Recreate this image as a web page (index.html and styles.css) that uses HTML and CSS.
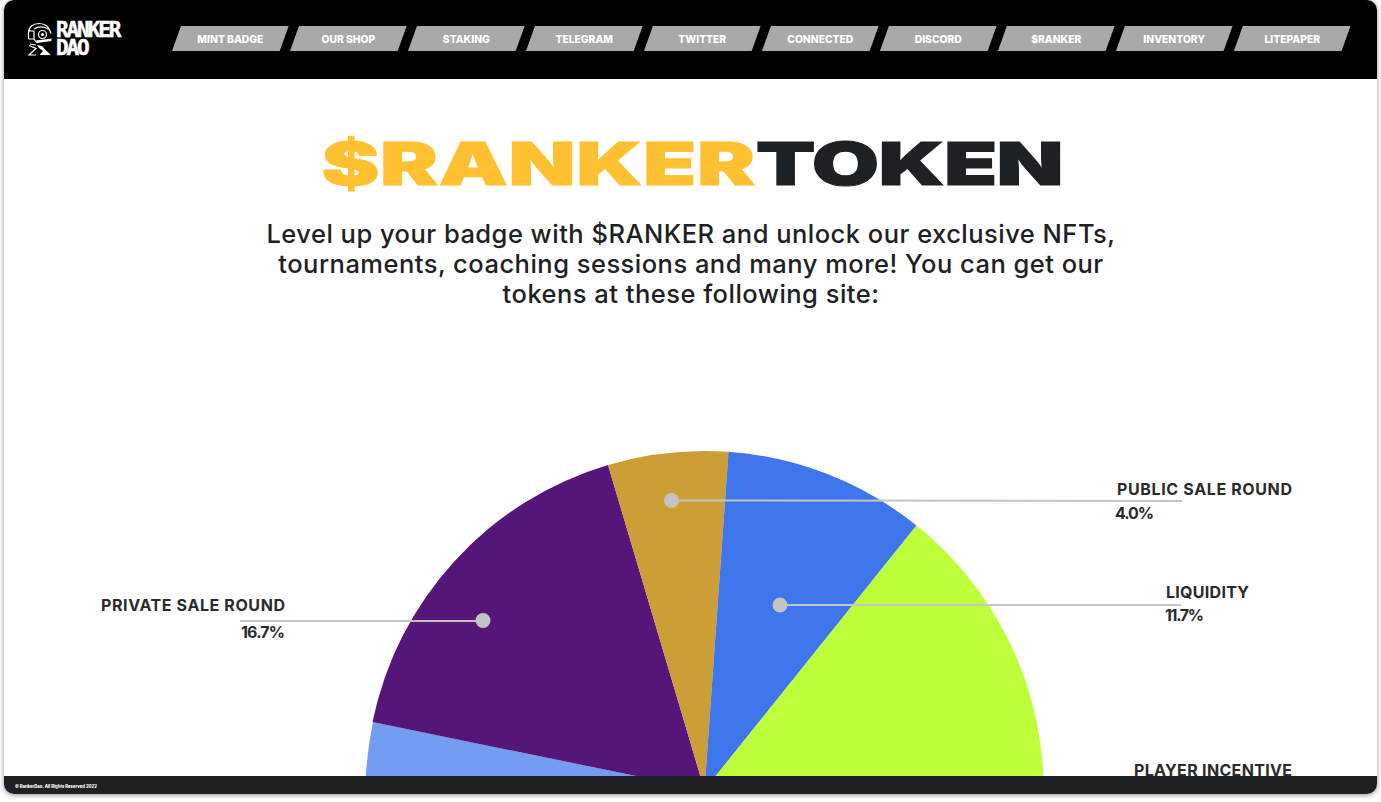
FILE: index.html
```html
<!DOCTYPE html>
<html lang="en">
<head>
    <meta charset="UTF-8">
    <meta name="viewport" content="width=device-width, initial-scale=1.0">
    <title>RankerDao - $RANKER Token</title>
    <link rel="stylesheet" href="styles.css">
</head>
<body>
    <div class="window">
        <header class="topbar">
            <a class="logo" href="#">
                <svg class="logo-robot" viewBox="0 0 27 36" width="27" height="36">
                    <path class="robot-line" d="M2.5 18V12C2.5 6 7 2.5 13 2.5C19 2.5 23.5 6 25 12.5"/>
                    <path class="robot-line" d="M2.5 10H8V18H2.5M8 8C12 5.500 18 5.500 23 8.500"/>
                    <path class="robot-line" d="M8 18L11 22"/>
                    <circle class="robot-line" cx="16.500" cy="13.500" r="4"/>
                    <circle class="robot-fill" cx="16.500" cy="13.500" r="1.600"/>
                    <path class="robot-fill" d="M10 19.500L25.500 17.500V20L11 22Z"/>
                    <path class="robot-fill" d="M11 24L16 25L20 29.500L25 34H13.500L17 30L13 27Z"/>
                    <path class="robot-line" d="M3 24.500L10 27.500L3 34H10M10 24L4 23"/>
                </svg>
                <span class="logo-text">RANKER<br>DAO</span>
            </a>
            <nav class="menu">
                <a href="#">MINT BADGE</a>
                <a href="#">OUR SHOP</a>
                <a href="#">STAKING</a>
                <a href="#">TELEGRAM</a>
                <a href="#">TWITTER</a>
                <a href="#">CONNECTED</a>
                <a href="#">DISCORD</a>
                <a href="#">$RANKER</a>
                <a href="#">INVENTORY</a>
                <a href="#">LITEPAPER</a>
            </nav>
        </header>

        <main class="content">
            <h1 class="title"><span class="title-inner"><span class="yellow">$RANKER</span><span class="dark">TOKEN</span></span></h1>
            <p class="intro">Level up your badge with $RANKER and unlock our exclusive NFTs,<br>tournaments, coaching sessions and many more! You can get our<br>tokens at these following site:</p>

            <!-- viewBox uses the same numbers as the page so the chart is easy to measure -->
            <svg class="chart" viewBox="4 400 1373 400" width="1373" height="400">
                <path fill="#729df0" d="M704.5 790L373 722A339 339 0 0 0 365.5 790Z"/>
                <path fill="#561578" d="M704.5 790L608 465A339 339 0 0 0 372.5 722Z"/>
                <path fill="#cb9e36" d="M704.5 790L728.5 451.8A339 339 0 0 0 608 465Z"/>
                <path fill="#4076eb" d="M704.5 790L916.5 525.5A339 339 0 0 0 728.5 451.8Z"/>
                <path fill="#bdff3a" d="M704.5 790L1043.5 790A339 339 0 0 0 916.5 525.5Z"/>

                <line class="leader" x1="671" y1="500.5" x2="1182" y2="501"/>
                <circle class="dot" cx="671.5" cy="500.5" r="7.5"/>
                <line class="leader" x1="780" y1="605" x2="1181" y2="605"/>
                <circle class="dot" cx="780" cy="605" r="7.5"/>
                <line class="leader" x1="240" y1="621" x2="483" y2="621"/>
                <circle class="dot" cx="483" cy="620.5" r="7.5"/>

                <text class="label" x="1117" y="494.5" textLength="175">PUBLIC SALE ROUND</text>
                <text class="label" x="1115" y="519" textLength="39">4.0%</text>
                <text class="label" x="1166" y="597.5" textLength="83">LIQUIDITY</text>
                <text class="label" x="1165" y="621" textLength="39">11.7%</text>
                <text class="label" x="101" y="610.5" textLength="184">PRIVATE SALE ROUND</text>
                <text class="label" x="241" y="638" textLength="44">16.7%</text>
                <text class="label" x="1134" y="775.5" textLength="158">PLAYER INCENTIVE</text>
            </svg>
        </main>

        <footer class="bottombar">© RankerDao. All Rights Reserved 2022</footer>
    </div>
</body>
</html>
```

FILE: styles.css
```css
*{
    box-sizing: border-box;
    margin: 0;
    padding: 0;
}
body{
    height: 802px;
    overflow: hidden;
    background-color: #ffffff;
    font-family: Inter, "Noto Sans", sans-serif;
}
a{
    text-decoration: none;
}
.window{
    display: flex;
    flex-direction: column;
    height: 794px;
    margin: 0 4px;
    border-radius: 10px;
    overflow: hidden;
    background: #ffffff;
    box-shadow: 0 1px 5px rgba(0,0,0,0.45);
}
.topbar{
    display: flex;
    align-items: center;
    flex: none;
    height: 79px;
    padding-left: 22px;
    padding-bottom: 2px;
    background: #000000;
}
.logo{
    display: flex;
    align-items: center;
    gap: 3px;
    width: 146px;
    flex: none;
    color: #ffffff;
}
.logo-robot{
    flex: none;
}
.robot-line{
    fill: none;
    stroke: #ffffff;
    stroke-width: 1.2;
}
.robot-fill{
    fill: #ffffff;
}
.logo-text{
    font-family: "DejaVu Sans Mono", monospace;
    font-size: 21px;
    font-weight: 700;
    line-height: 18px;
    letter-spacing: -2.1px;
    -webkit-text-stroke: 0.5px #ffffff;
}
.menu{
    display: flex;
    gap: 1.3px;
}
.menu a{
    display: flex;
    align-items: center;
    justify-content: center;
    width: 116.7px;
    height: 25px;
    background: #a9a9a9;
    color: #ffffff;
    font-size: 10.3px;
    font-weight: 800;
    clip-path: polygon(9px 0, 100% 0, calc(100% - 9px) 100%, 0 100%);
}
.content{
    flex: 1;
    min-height: 0;
    overflow: hidden;
}
.title{
    display: flex;
    justify-content: center;
    margin-top: 50px;
    padding-left: 3px;
    color: #1e2124;
    font-size: 59px;
    font-weight: 900;
    line-height: 70px;
}
.title-inner{
    display: block;
    transform: scaleX(1.476);
    -webkit-text-stroke: 1px currentColor;
}
.yellow{
    color: #ffc131;
    letter-spacing: 0.4px;
}
.dark{
    letter-spacing: -0.5px;
}
.intro{
    margin-top: 20px;
    padding-left: 1px;
    color: #1e2124;
    font-size: 25.5px;
    font-weight: 500;
    line-height: 30px;
    letter-spacing: 0.48px;
    text-align: center;
}
.chart{
    display: block;
    margin-top: 91px;
}
.leader{
    stroke: #c4c4c4;
    stroke-width: 2;
}
.dot{
    fill: #c4c4c4;
}
.label{
    fill: #2a2a2a;
    font-size: 16px;
    font-weight: 700;
}
.bottombar{
    flex: none;
    height: 18px;
    padding-left: 11px;
    background: #1e2124;
    color: #ffffff;
    font-size: 4.2px;
    font-weight: 800;
    line-height: 21px;
}
```
